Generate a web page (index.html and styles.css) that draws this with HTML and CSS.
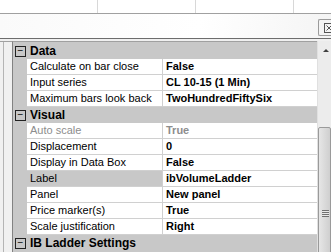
FILE: index.html
```html
<!DOCTYPE html>
<html lang="en">
<head>
    <meta charset="UTF-8">
    <title>Indicator properties</title>
    <link rel="stylesheet" href="styles.css">
</head>
<body>

<div class="tabs">
    <div class="tab"></div>
    <div class="tab"></div>
    <div class="tab"></div>
    <div class="tab last"></div>
</div>

<div class="toolbar">
    <div class="tool-btn">
        <svg width="10" height="10" viewBox="0 0 10 10">
            <rect x="0.5" y="0.5" width="9" height="9" fill="none" stroke="#555"/>
            <path d="M2.5 2.5 L7.5 7.5 M7.5 2.5 L2.5 7.5" stroke="#555"/>
        </svg>
    </div>
</div>

<div class="main">
    <div class="side"></div>

    <div class="grid">
        <div class="cat"><span class="box">&minus;</span>Data</div>
        <div class="row"><div class="name">Calculate on bar close</div><div class="val">False</div></div>
        <div class="row"><div class="name">Input series</div><div class="val">CL 10-15 (1 Min)</div></div>
        <div class="row"><div class="name">Maximum bars look back</div><div class="val">TwoHundredFiftySix</div></div>

        <div class="cat"><span class="box">&minus;</span>Visual</div>
        <div class="row off"><div class="name">Auto scale</div><div class="val">True</div></div>
        <div class="row"><div class="name">Displacement</div><div class="val">0</div></div>
        <div class="row"><div class="name">Display in Data Box</div><div class="val">False</div></div>
        <div class="row sel"><div class="name">Label</div><div class="val">ibVolumeLadder</div></div>
        <div class="row"><div class="name">Panel</div><div class="val">New panel</div></div>
        <div class="row"><div class="name">Price marker(s)</div><div class="val">True</div></div>
        <div class="row"><div class="name">Scale justification</div><div class="val">Right</div></div>

        <div class="cat"><span class="box">&minus;</span>IB Ladder Settings</div>
    </div>

    <div class="scroll">
        <div class="arrow"></div>
        <div class="thumb"><div class="grip"></div></div>
    </div>
</div>

</body>
</html>
```

FILE: styles.css
```css
body {
    margin: 0;
    width: 331px;
    height: 252px;
    overflow: hidden;
    font-family: "Liberation Sans", Arial, sans-serif;
    font-size: 11px;
    background-color: #fff;
}

.tabs {
    display: flex;
    height: 13px;
    border-bottom: 1px solid #a0a0a0;
}

.tab {
    width: 97px;
    border-right: 1px solid #d8d8d8;
}

.tab.last {
    flex: 1;
    border-right: none;
}

.toolbar {
    height: 24px;
    display: flex;
    justify-content: flex-end;
    align-items: flex-start;
    background: linear-gradient(100deg, #fafafa 0%, #ffffff 60%, #f4f4f4 100%);
    border-bottom: 1px solid #6d6d6d;
}

.tool-btn {
    margin-top: 5px;
    width: 12px;
    height: 15px;
    border: 1px solid #9a9a9a;
    border-right: none;
    border-radius: 2px 0 0 2px;
    background-color: #f4f4f4;
    display: flex;
    align-items: center;
    justify-content: flex-end;
    overflow: hidden;
}

.tool-btn svg {
    flex: none;
    margin-right: -3px;
}

.main {
    display: flex;
    height: 211px;
    overflow: hidden;
    border-top: 2px solid #f0f0f0;
}

.side {
    width: 12px;
    border-top: 1px solid #a0a0a0;
    box-sizing: border-box;
    background-image: linear-gradient(to right, #f0f0f0 3px, #b4b4b4 3px, #b4b4b4 4px, #f0f0f0 4px);
}

.grid {
    width: 304px;
    padding-top: 1px;
    border-top: 1px solid #a0a0a0;
    border-left: 1px solid #828282;
    background-color: #c8c8c8;
    color: #000;
}

.cat {
    height: 16px;
    line-height: 16px;
    font-weight: bold;
    font-size: 12px;
    display: flex;
    align-items: center;
}

.box {
    width: 9px;
    height: 9px;
    margin: 0 4px 0 2px;
    border: 1px solid #222;
    font-size: 10px;
    line-height: 8px;
    text-align: center;
    font-weight: normal;
}

.row {
    display: flex;
    height: 16px;
    margin-left: 14px;
    background-color: #fff;
    border-bottom: 1px solid #d0d0d0;
    box-sizing: border-box;
}

.name {
    width: 136px;
    padding-left: 3px;
    line-height: 15px;
    border-right: 1px solid #d0d0d0;
    box-sizing: border-box;
    white-space: nowrap;
    overflow: hidden;
}

.val {
    flex: 1;
    padding-left: 3px;
    line-height: 15px;
    font-weight: bold;
    white-space: nowrap;
}

.row.off .name,
.row.off .val {
    color: #8d8d8d;
}

.row.sel .name {
    background-color: #c8c8c8;
}

.scroll {
    flex: 1;
    background-color: #ececec;
    border-left: 1px solid #e0e0e0;
    position: relative;
    overflow: hidden;
}

.arrow {
    position: absolute;
    left: 5px;
    top: 8px;
    width: 0;
    height: 0;
    border-left: 3px solid transparent;
    border-right: 3px solid transparent;
    border-bottom: 3px solid #404040;
}

.thumb {
    position: absolute;
    left: 0;
    right: 0;
    top: 86px;
    height: 150px;
    border: 1px solid #9a9a9a;
    border-radius: 2px;
    background: linear-gradient(to right, #e6e6e6, #d8d8d8 60%, #cfcfcf);
}

.grip {
    position: absolute;
    left: 3px;
    top: 82px;
    width: 7px;
    height: 7px;
    background-image: repeating-linear-gradient(to bottom, #707070 0, #707070 1px, #e8e8e8 1px, #e8e8e8 2px);
}
```
